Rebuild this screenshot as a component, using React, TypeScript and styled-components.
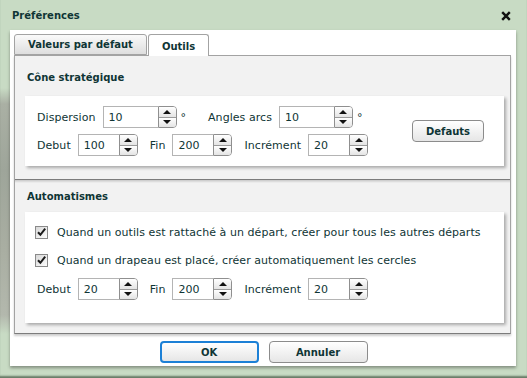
import styled, { createGlobalStyle } from 'styled-components';

const GlobalStyle = createGlobalStyle`
  html, body {
    margin: 0;
    padding: 0;
  }
  body {
    background: #c8dbc4;
    font-family: "DejaVu Sans", Verdana, sans-serif;
    color: #0f3535;
  }
`;

const Frame = styled.div`
  width: 527px;
  height: 378px;
  box-sizing: border-box;
  display: flex;
  flex-direction: column;
  padding: 0 11px 12px 10px;
  background:
    linear-gradient(to bottom, rgba(160, 166, 154, 0) 88px, #aab0a4 104px, #9ea59a 170px, #a9aea2 250px, #b3b8ad 315px, rgba(160, 166, 154, 0) 334px) 0 0 / 10px 100% no-repeat,
    #c8dbc4;
  box-shadow: inset 0 -3px 2px -1px rgba(50, 70, 50, 0.65);
`;

const TitleBar = styled.div`
  height: 30px;
  display: flex;
  align-items: center;
  justify-content: space-between;
  padding: 0 5px 0 2px;
`;

const Title = styled.span`
  font-size: 10px;
  font-weight: bold;
  color: #0f3535;
`;

const CloseIcon = styled.svg`
  width: 10px;
  height: 10px;
  margin-top: 1px;
`;

const Body = styled.div`
  flex: 1;
  display: flex;
  flex-direction: column;
  background: #ffffff;
  padding: 4px 5px 0 4px;
  box-shadow: 0 2px 3px rgba(0, 0, 0, 0.35);
`;

const TabRow = styled.div`
  display: flex;
  align-items: flex-start;
  gap: 1px;
  height: 21px;
  position: relative;
  z-index: 1;
`;

const Tab = styled.div<{ active?: boolean }>`
  box-sizing: border-box;
  height: ${(p) => (p.active ? '22px' : '21px')};
  padding: 0 13px 0 13px;
  display: flex;
  align-items: center;
  font-size: 10px;
  font-weight: bold;
  border: 1px solid #a3a3a3;
  border-bottom: ${(p) => (p.active ? 'none' : '1px solid #a3a3a3')};
  border-radius: 3px 3px 0 0;
  padding-top: ${(p) => (p.active ? '1px' : '0')};
  background: ${(p) => (p.active ? '#ffffff' : 'linear-gradient(to bottom, #fafafa, #dedede)')};
`;

const Panel = styled.div`
  height: 279px;
  box-sizing: border-box;
  display: flex;
  flex-direction: column;
  border: 1px solid #a3a3a3;
  border-bottom-color: #7c7c7c;
  box-shadow: 0 2px 2px rgba(0, 0, 0, 0.2);
`;

const Section = styled.div<{ first?: boolean }>`
  background: ${(p) => (p.first ? '#f2f2f2' : 'linear-gradient(to bottom, #c8c8c8 0, #f2f2f2 3px)')};
  border-bottom: ${(p) => (p.first ? '1px solid #7c7c7c' : 'none')};
  flex: ${(p) => (p.first ? 'none' : '1')};
  height: ${(p) => (p.first ? '124px' : 'auto')};
  box-sizing: border-box;
`;

const SectionTitle = styled.div<{ first?: boolean }>`
  font-size: 10px;
  font-weight: bold;
  line-height: 12px;
  padding: ${(p) => (p.first ? '16px 12px 12px' : '11px 12px 9px')};
`;

const Card = styled.div`
  background: #ffffff;
  margin: 0 6px 0 10px;
  padding: 10px 20px 10px 12px;
  box-shadow: 2px 2px 3px rgba(0, 0, 0, 0.3);
  display: flex;
  align-items: center;
`;

const AutoCard = styled(Card)`
  flex-direction: column;
  align-items: stretch;
  padding: 12px 20px 23px 12px;
`;

const Fields = styled.div`
  display: flex;
  flex-direction: column;
  gap: 6px;
`;

const Row = styled.div<{ gap: number }>`
  display: flex;
  align-items: center;
  gap: ${(p) => p.gap}px;
  height: 22px;
`;

const Field = styled.div`
  display: flex;
  align-items: center;
  gap: 7px;
`;

const Label = styled.span`
  font-size: 11px;
  letter-spacing: 0.05px;
  white-space: nowrap;
`;

const Unit = styled.span`
  font-size: 11px;
  margin-left: -3px;
`;

const Spin = styled.div`
  display: flex;
  height: 22px;
`;

const SpinInput = styled.div<{ w: number }>`
  box-sizing: border-box;
  width: ${(p) => p.w}px;
  height: 22px;
  border: 1px solid #b4b4b4;
  border-right: none;
  padding-left: 5px;
  font-size: 11px;
  display: flex;
  align-items: center;
`;

const SpinButtons = styled.div`
  box-sizing: border-box;
  width: 19px;
  height: 22px;
  border: 1px solid #8f8f8f;
  border-radius: 0 4px 4px 0;
  display: flex;
  flex-direction: column;
  overflow: hidden;
`;

const SpinHalf = styled.div<{ down?: boolean }>`
  flex: 1;
  display: flex;
  align-items: center;
  justify-content: center;
  background: linear-gradient(to bottom, #ffffff, #e4e4e4);
  border-top: ${(p) => (p.down ? '1px solid #9a9a9a' : 'none')};

  &::after {
    content: '';
    width: 0;
    height: 0;
    border-left: 4px solid transparent;
    border-right: 4px solid transparent;
    ${(p) => (p.down ? 'border-top: 4px solid #111;' : 'border-bottom: 4px solid #111;')}
  }
`;

const Button = styled.button<{ focused?: boolean }>`
  box-sizing: border-box;
  height: 22px;
  width: 72px;
  font-family: "DejaVu Sans", Verdana, sans-serif;
  font-size: 10px;
  font-weight: bold;
  color: #0f3535;
  padding: 0;
  border-radius: 4px;
  border: ${(p) => (p.focused ? '2px solid #1c80d6' : '1px solid #8c8c8c')};
  background: linear-gradient(to bottom, #ffffff, #e6e6e6);
`;

const WideButton = styled(Button)`
  width: 99px;
`;

const DefaultsButton = styled(Button)`
  margin-left: auto;
`;

const CheckRow = styled.label`
  display: flex;
  align-items: center;
  gap: 9px;
  height: 16px;
  margin-left: -2px;
  margin-bottom: 12px;
  font-size: 11px;
  letter-spacing: 0.06px;
  white-space: nowrap;
`;

const Box = styled.svg`
  width: 13px;
  height: 13px;
  flex: none;
`;

const AutoRow = styled(Row)`
  margin-top: -2px;
`;

const Footer = styled.div`
  flex: 1;
  display: flex;
  justify-content: center;
  gap: 10px;
  padding-top: 7px;
  padding-left: 2px;
`;

type SpinProps = { value: string; w: number };

function SpinBox({ value, w }: SpinProps) {
  return (
    <Spin>
      <SpinInput w={w}>{value}</SpinInput>
      <SpinButtons>
        <SpinHalf />
        <SpinHalf down />
      </SpinButtons>
    </Spin>
  );
}

function Check({ children }: { children: string }) {
  return (
    <CheckRow>
      <Box viewBox="0 0 13 13">
        <defs>
          <linearGradient id="cb" x1="0" y1="0" x2="1" y2="1">
            <stop offset="0" stopColor="#d6d6d6" />
            <stop offset="1" stopColor="#ffffff" />
          </linearGradient>
        </defs>
        <rect x="0.5" y="0.5" width="12" height="12" fill="url(#cb)" stroke="#8a8a8a" />
        <path d="M3 6.2 L5.4 8.8 L10.2 2.6" fill="none" stroke="#1b1b1b" strokeWidth="2" />
      </Box>
      {children}
    </CheckRow>
  );
}

type RangeProps = { start: string; end: string; step: string };

function RangeFields({ start, end, step }: RangeProps) {
  return (
    <>
      <Field>
        <Label>Debut</Label>
        <SpinBox value={start} w={41} />
      </Field>
      <Field>
        <Label>Fin</Label>
        <SpinBox value={end} w={41} />
      </Field>
      <Field>
        <Label>Incrément</Label>
        <SpinBox value={step} w={41} />
      </Field>
    </>
  );
}

export default function App() {
  return (
    <>
      <GlobalStyle />
      <Frame>
        <TitleBar>
          <Title>Préférences</Title>
          <CloseIcon viewBox="0 0 10 10">
            <path d="M1.2 1.2 L8.8 8.8 M8.8 1.2 L1.2 8.8" stroke="#111" strokeWidth="2.4" />
          </CloseIcon>
        </TitleBar>
        <Body>
          <TabRow>
            <Tab>Valeurs par défaut</Tab>
            <Tab active>Outils</Tab>
          </TabRow>
          <Panel>
            <Section first>
              <SectionTitle first>Cône stratégique</SectionTitle>
              <Card>
                <Fields>
                  <Row gap={22}>
                    <Field>
                      <Label>Dispersion</Label>
                      <SpinBox value="10" w={55} />
                      <Unit>°</Unit>
                    </Field>
                    <Field>
                      <Label>Angles arcs</Label>
                      <SpinBox value="10" w={55} />
                      <Unit>°</Unit>
                    </Field>
                  </Row>
                  <Row gap={12}>
                    <RangeFields start="100" end="200" step="20" />
                  </Row>
                </Fields>
                <DefaultsButton>Defauts</DefaultsButton>
              </Card>
            </Section>
            <Section>
              <SectionTitle>Automatismes</SectionTitle>
              <AutoCard>
                <Check>Quand un outils est rattaché à un départ, créer pour tous les autres départs</Check>
                <Check>Quand un drapeau est placé, créer automatiquement les cercles</Check>
                <AutoRow gap={12}>
                  <RangeFields start="20" end="200" step="20" />
                </AutoRow>
              </AutoCard>
            </Section>
          </Panel>
          <Footer>
            <WideButton focused>OK</WideButton>
            <WideButton>Annuler</WideButton>
          </Footer>
        </Body>
      </Frame>
    </>
  );
}
